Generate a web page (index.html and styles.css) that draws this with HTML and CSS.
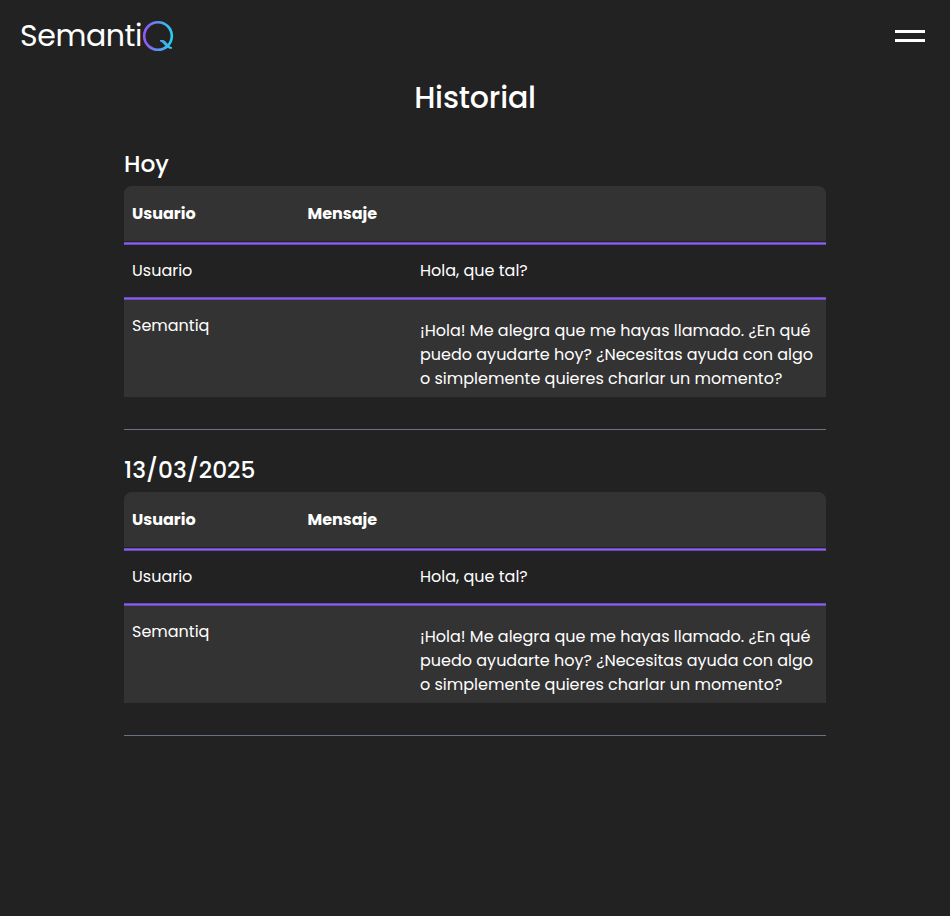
FILE: index.html
```html
<!DOCTYPE html>
<html lang="es">
<head>
<meta charset="utf-8">
<title>Historial</title>
<link rel="stylesheet" href="styles.css">
</head>
<body>
<header class="topbar">
  <a class="logo"><span class="logo-text">Semanti</span><svg class="logo-mark" viewBox="0 0 32 32" fill="none">
    <defs><linearGradient id="brand" gradientUnits="userSpaceOnUse" x1="4" y1="0" x2="31" y2="0"><stop offset="0" stop-color="#8b5cf6"/><stop offset="1" stop-color="#22d3ee"/></linearGradient></defs>
    <circle cx="16" cy="16" r="13.800" stroke="url(#brand)" stroke-width="2.600"/>
    <path d="M18 19.900h2.600c1 0 1.600.4 2.400 1.200l4.900 5.100c.6.600 1.100.8 2.100.8v1.800h-2.300c-1.200 0-1.900-.4-2.700-1.200l-4.900-5.100c-.6-.6-1.100-1-2.100-1.100z" fill="url(#brand)"/>
  </svg></a>
  <button class="menu" aria-label="Menu"><span></span><span></span></button>
</header>
<main class="page">
  <h1 class="title">Historial</h1>
  <section class="day">
    <h2 class="date">Hoy</h2>
    <div class="table">
      <div class="row head"><span>Usuario</span><span>Mensaje</span></div>
      <div class="row"><span>Usuario</span><p>Hola, que tal?</p></div>
      <div class="row answer"><span>Semantiq</span><p class="msg">¡Hola! Me alegra que me hayas llamado. ¿En qué puedo ayudarte hoy? ¿Necesitas ayuda con algo o simplemente quieres charlar un momento?</p></div>
    </div>
  </section>
  <section class="day">
    <h2 class="date">13/03/2025</h2>
    <div class="table">
      <div class="row head"><span>Usuario</span><span>Mensaje</span></div>
      <div class="row"><span>Usuario</span><p>Hola, que tal?</p></div>
      <div class="row answer"><span>Semantiq</span><p class="msg">¡Hola! Me alegra que me hayas llamado. ¿En qué puedo ayudarte hoy? ¿Necesitas ayuda con algo o simplemente quieres charlar un momento?</p></div>
    </div>
  </section>
</main>
</body>
</html>
```

FILE: styles.css
```css
* { box-sizing: border-box; margin: 0; padding: 0; }
body {
  background: #222;
  color: #fff;
  font: 400 16px/24px Poppins, Inter, sans-serif;
}
.topbar { display: flex; justify-content: space-between; align-items: center; height: 72px; padding: 0 25px 0 20px; }
.logo { display: flex; align-items: center; }
.logo-text { width: 122px; font-size: 30px; font-weight: 400; letter-spacing: -0.4px; line-height: 40px; white-space: nowrap; }
.logo-mark { width: 32px; height: 32px; }
.menu { display: flex; flex-direction: column; gap: 6px; width: 30px; border: 0; background: none; }
.menu span { height: 3px; background: #fff; }
.page { width: 702px; margin: 0 auto; }
.title { font-size: 30px; font-weight: 500; letter-spacing: -0.15px; line-height: 36px; text-align: center; padding-top: 8px; height: 76px; }
.day { height: 282px; border-bottom: 1px solid #6b7280; margin-bottom: 24px; }
.date { height: 38px; padding-top: 1px; font-size: 23.3px; font-weight: 500; line-height: 31px; }
.row {
  display: grid;
  grid-template-columns: 288px 1fr;
  height: 55px;
  padding: 14px 8px 0;
  background: linear-gradient(#6b4bb4 0 1px, #8b5cf6 1px 2px, #6b4bb4 2px 3px) bottom / 100% 3px no-repeat;
}
.head {
  grid-template-columns: 175.5px 1fr;
  height: 59px;
  padding-top: 16px;
  background: linear-gradient(#333 0 55px, #222 55px 56px, #6b4bb4 56px 57px, #8b5cf6 57px 58px, #6b4bb4 58px);
  border-radius: 8px 8px 0 0;
  font-weight: 700;
}
.answer { height: 97px; background: #333; }
.answer .msg { padding-top: 5px; }
```
